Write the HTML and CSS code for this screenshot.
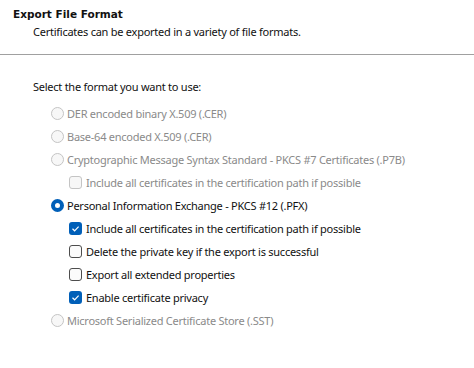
FILE: index.html
```html
<!DOCTYPE html>
<html lang="en">
<head>
    <meta charset="UTF-8">
    <title>Certificate Export Wizard</title>
    <link rel="stylesheet" href="styles.css">
</head>
<body>
    <div class="header">
        <h1>Export File Format</h1>
        <p>Certificates can be exported in a variety of file formats.</p>
    </div>

    <div class="content">
        <p class="prompt">Select the format you want to use:</p>

        <div class="option disabled"><span class="radio"></span>DER encoded binary X.509 (.CER)</div>
        <div class="option disabled"><span class="radio"></span>Base-64 encoded X.509 (.CER)</div>
        <div class="option disabled"><span class="radio"></span>Cryptographic Message Syntax Standard - PKCS #7 Certificates (.P7B)</div>
        <div class="option sub disabled"><span class="check"></span>Include all certificates in the certification path if possible</div>

        <div class="option"><span class="radio on"></span>Personal Information Exchange - PKCS #12 (.PFX)</div>
        <div class="option sub"><span class="check on"><svg viewBox="0 0 13 13"><path d="M3.5 6.8 L5.6 8.8 L9.6 4.6"/></svg></span>Include all certificates in the certification path if possible</div>
        <div class="option sub"><span class="check"></span>Delete the private key if the export is successful</div>
        <div class="option sub"><span class="check"></span>Export all extended properties</div>
        <div class="option sub"><span class="check on"><svg viewBox="0 0 13 13"><path d="M3.5 6.8 L5.6 8.8 L9.6 4.6"/></svg></span>Enable certificate privacy</div>

        <div class="option disabled"><span class="radio"></span>Microsoft Serialized Certificate Store (.SST)</div>
    </div>
</body>
</html>
```

FILE: styles.css
```css
body {
    margin: 0;
    background: #ffffff;
    color: #111111;
    font-family: "Noto Sans", sans-serif;
    font-size: 11px;
    letter-spacing: -0.25px;
}

.header {
    height: 55px;
    border-bottom: 1px solid #a0a0a0;
    box-sizing: border-box;
}

.header h1 {
    margin: 0;
    padding: 7px 0 0 13px;
    font-family: "DejaVu Sans", sans-serif;
    font-size: 10.5px;
    font-weight: bold;
    letter-spacing: 0;
    line-height: 14px;
}

.header p {
    margin: 2px 0 0 33px;
    line-height: 17px;
}

.content {
    padding: 23px 0 0 33px;
}

.prompt {
    margin: 0 0 7px 0;
    line-height: 17px;
}

.option {
    display: flex;
    align-items: center;
    height: 23px;
    margin-left: 18px;
    line-height: 17px;
    white-space: nowrap;
}

.option.sub {
    margin-left: 36px;
}

.option.disabled {
    color: #8a8a8a;
}

.radio {
    width: 11px;
    height: 11px;
    border: 1px solid #8c8c8c;
    border-radius: 50%;
    margin-right: 3px;
    background: #fafafa;
    flex-shrink: 0;
}

.disabled .radio {
    border-color: #c4c4c4;
    background: #f7f7f7;
}

.radio.on {
    width: 5px;
    height: 5px;
    border: 4px solid #005fb8;
    background: #ffffff;
}

.check {
    width: 11px;
    height: 11px;
    border: 1px solid #4d4d4d;
    border-radius: 3px;
    margin-right: 4px;
    background: #fbfbfb;
    flex-shrink: 0;
    display: flex;
}

.disabled .check {
    border-color: #c4c4c4;
    background: #f7f7f7;
}

.check.on {
    width: 13px;
    height: 13px;
    border: none;
    background: #005fb8;
}

.check svg {
    width: 13px;
    height: 13px;
}

.check path {
    fill: none;
    stroke: #ffffff;
    stroke-width: 1.2;
}
```
